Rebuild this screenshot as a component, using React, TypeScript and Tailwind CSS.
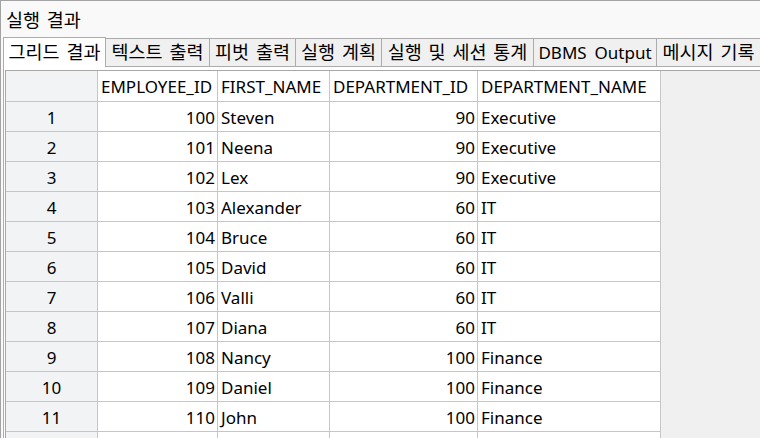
const rows: [number, number, string, number, string][] = [
  [1, 100, 'Steven', 90, 'Executive'],
  [2, 101, 'Neena', 90, 'Executive'],
  [3, 102, 'Lex', 90, 'Executive'],
  [4, 103, 'Alexander', 60, 'IT'],
  [5, 104, 'Bruce', 60, 'IT'],
  [6, 105, 'David', 60, 'IT'],
  [7, 106, 'Valli', 60, 'IT'],
  [8, 107, 'Diana', 60, 'IT'],
  [9, 108, 'Nancy', 100, 'Finance'],
  [10, 109, 'Daniel', 100, 'Finance'],
  [11, 110, 'John', 100, 'Finance'],
];

const tabs = [
  { label: '텍스트 출력', w: 'w-[104px]', ko: true },
  { label: '피벗 출력', w: 'w-[86px]', ko: true },
  { label: '실행 계획', w: 'w-[86px]', ko: true },
  { label: '실행 및 세션 통계', w: 'w-[152px]', ko: true },
  { label: 'DBMS Output', w: 'w-[123px]', ko: false },
  { label: '메시지 기록', w: 'w-[104px]', ko: true },
];

const cell = 'shrink-0 border-r border-b border-[#c6c6c6] flex items-center overflow-hidden whitespace-nowrap';

export default function App() {
  return (
    <div
      className="w-[760px] h-[438px] overflow-hidden bg-[#f9f9f9] border-t border-l border-[#a3a3a3] text-[17px] text-black leading-none [word-spacing:3.5px] flex flex-col"
      style={{ fontFamily: '"Noto Sans", "Noto Sans CJK KR", sans-serif' }}
    >
      {/* Title */}
      <div className="h-[36px] shrink-0 flex items-center pl-[5px] pt-[2px] text-[18.5px] [word-spacing:2px]">실행 결과</div>

      {/* Tab strip */}
      <div className="flex items-end h-[30px] shrink-0 ml-[2px]">
        <div className="w-[103px] h-[30px] shrink-0 bg-white border-l border-t border-r border-[#acacac] flex items-center justify-center pb-[1px] text-[18.5px] [word-spacing:2px]">
          그리드 결과
        </div>
        {tabs.map((t) => (
          <div
            key={t.label}
            className={`${t.w} h-[29px] shrink-0 bg-[#f0f0f0] border-t border-r border-b border-[#acacac] flex items-center justify-center whitespace-nowrap overflow-hidden ${t.ko ? 'text-[18.5px] [word-spacing:2px]' : ''}`}
          >
            {t.label}
          </div>
        ))}
        <div className="flex-1 border-b border-[#acacac]" />
      </div>

      {/* Panel */}
      <div className="flex-1 ml-[2px] border-l border-[#acacac] bg-white pt-[3px] pl-[1px] flex flex-col min-h-0">
        <div className="flex-1 border-t border-l border-[#a8a8a8] bg-[#f0f0f0] overflow-hidden">
          <div className="w-[655px] bg-white">
            {/* Header */}
            <div className="flex h-[31px]">
              <div className={`${cell} w-[92px] bg-[#f2f3f5]`} />
              <div className={`${cell} w-[120px] pl-[3px]`}>EMPLOYEE_ID</div>
              <div className={`${cell} w-[112px] pl-[3px]`}>FIRST_NAME</div>
              <div className={`${cell} w-[148px] pl-[3px]`}>DEPARTMENT_ID</div>
              <div className={`${cell} w-[183px] pl-[3px]`}>DEPARTMENT_NAME</div>
            </div>
            {rows.map(([n, id, name, dept, dname]) => (
              <div key={n} className="flex h-[30px]">
                <div className={`${cell} w-[92px] bg-[#f2f3f5] justify-center pt-[2px]`}>{n}</div>
                <div className={`${cell} w-[120px] justify-end pr-[2px] pt-[2px]`}>{id}</div>
                <div className={`${cell} w-[112px] pl-[3px] pt-[2px]`}>{name}</div>
                <div className={`${cell} w-[148px] justify-end pr-[2px] pt-[2px]`}>{dept}</div>
                <div className={`${cell} w-[183px] pl-[3px] pt-[2px]`}>{dname}</div>
              </div>
            ))}
            {/* partially visible next row */}
            <div className="flex h-[30px]">
              <div className={`${cell} w-[92px] bg-[#f2f3f5]`} />
              <div className={`${cell} w-[120px]`} />
              <div className={`${cell} w-[112px]`} />
              <div className={`${cell} w-[148px]`} />
              <div className={`${cell} w-[183px]`} />
            </div>
          </div>
        </div>
      </div>
    </div>
  );
}
